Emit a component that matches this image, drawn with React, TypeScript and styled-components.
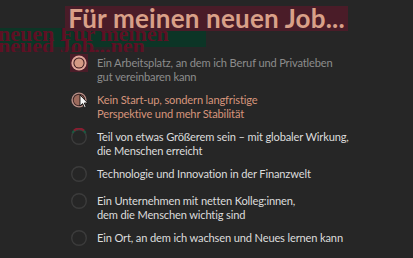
import styled, { createGlobalStyle } from "styled-components";

const GlobalStyle = createGlobalStyle`
  html, body {
    margin: 0;
    padding: 0;
    background: #262626;
  }
  body {
    font-family: "Lato", "Open Sans", sans-serif;
  }
`;

const Page = styled.div`
  position: relative;
  width: 413px;
  height: 258px;
  overflow: hidden;
  background: #262626;
  display: flex;
  flex-direction: column;
  align-items: center;
`;

const Title = styled.h1`
  margin: 6px 0 0;
  padding: 0 3px;
  background: #4a1c28;
  color: #d9a088;
  font-family: "Lato", sans-serif;
  font-weight: 700;
  font-size: 26px;
  line-height: 25px;
  letter-spacing: 0.2px;
  position: relative;
  z-index: 1;
`;

/* glitch ghost of the headline, lying over the page */
const Ghost = styled.div`
  position: absolute;
  left: 0;
  top: 28px;
  width: 206px;
  height: 24px;
  overflow: hidden;
  background: linear-gradient(#0c3526 0, #0c3526 80%, #262626 80%);
  display: flex;
  flex-direction: column;
  line-height: 12px;
`;

const GhostLine = styled.div<{ $shift: number }>`
  white-space: nowrap;
  margin-left: ${(p) => p.$shift}px;
  font-family: "Liberation Serif", serif;
  font-weight: 700;
  font-size: 22px;
  color: #5e1024;
`;

const List = styled.ul`
  list-style: none;
  margin: 25px 0 0;
  padding: 0 0 0 70px;
  align-self: stretch;
  display: flex;
  flex-direction: column;
  gap: 9px;
`;

const Item = styled.li`
  display: flex;
  align-items: flex-start;
  gap: 9px;
  min-height: 18px;
`;

const Label = styled.div<{ $tone: "muted" | "accent" | "normal" }>`
  font-size: 11.1px;
  line-height: 14px;
  letter-spacing: -0.15px;
  color: ${(p) =>
    p.$tone === "muted" ? "#8c8c8c" : p.$tone === "accent" ? "#d6957c" : "#dcdcdc"};
`;

const RadioWrap = styled.div`
  position: relative;
  width: 18px;
  height: 18px;
  flex: none;
  margin-top: -2px;
`;

const Cursor = styled.svg`
  position: absolute;
  left: 9px;
  top: 3px;
`;

type Kind = "first" | "second" | "glitch" | "empty";

function Radio({ kind }: { kind: Kind }) {
  return (
    <RadioWrap>
      <svg width="18" height="18" viewBox="0 0 18 18">
        {kind === "first" && (
          <>
            <rect x="0" y="0" width="18" height="18" fill="#4a1c28" />
            <circle cx="9" cy="9" r="7.6" fill="#e0a69a" />
            <circle cx="9" cy="9" r="5.6" fill="#3a1a1e" />
            <circle cx="9" cy="9" r="4.6" fill="#d49a84" />
          </>
        )}
        {kind === "second" && (
          <>
            <circle cx="9" cy="9" r="7.6" fill="#b89088" />
            <circle cx="9" cy="9" r="6.2" fill="#3a2424" />
            <circle cx="9" cy="9" r="5.3" fill="#9c6a5c" />
          </>
        )}
        {(kind === "glitch" || kind === "empty") && (
          <circle cx="9" cy="9" r="7.3" fill="none" stroke="#3c3c3c" strokeWidth="1.4" />
        )}
        {kind === "glitch" && (
          <>
            <path d="M2.5 5 A7.3 7.3 0 0 1 15.5 5" fill="none" stroke="#1a5a40" strokeWidth="2" />
            <path d="M4 2.5 A7.3 7.3 0 0 1 14 2.5" fill="none" stroke="#8a1c30" strokeWidth="2" />
          </>
        )}
      </svg>
      {kind === "second" && (
        <Cursor width="10" height="15" viewBox="0 0 10 15">
          <path d="M1 1 L1 12 L3.6 9.6 L5.6 14 L7.2 13.3 L5.3 9 L8.8 9 Z" fill="#f4f4f4" stroke="#111" strokeWidth="0.9" />
        </Cursor>
      )}
    </RadioWrap>
  );
}

const items: { kind: Kind; tone: "muted" | "accent" | "normal"; lines: string[] }[] = [
  { kind: "first", tone: "muted", lines: ["Ein Arbeitsplatz, an dem ich Beruf und Privatleben", "gut vereinbaren kann"] },
  { kind: "second", tone: "accent", lines: ["Kein Start-up, sondern langfristige", "Perspektive und mehr Stabilität"] },
  { kind: "glitch", tone: "normal", lines: ["Teil von etwas Größerem sein – mit globaler Wirkung,", "die Menschen erreicht"] },
  { kind: "empty", tone: "normal", lines: ["Technologie und Innovation in der Finanzwelt"] },
  { kind: "empty", tone: "normal", lines: ["Ein Unternehmen mit netten Kolleg:innen,", "dem die Menschen wichtig sind"] },
  { kind: "empty", tone: "normal", lines: ["Ein Ort, an dem ich wachsen und Neues lernen kann"] },
];

export default function App() {
  return (
    <>
      <GlobalStyle />
      <Page>
        <Ghost aria-hidden>
          <GhostLine $shift={-2}>neuen Für meinen</GhostLine>
          <GhostLine $shift={-2}>neued Job...nen</GhostLine>
          <GhostLine $shift={6}>neuen Job...</GhostLine>
        </Ghost>
        <Title>Für meinen neuen Job...</Title>
        <List>
          {items.map((it, i) => (
            <Item key={i}>
              <Radio kind={it.kind} />
              <Label $tone={it.tone}>
                {it.lines.map((l, j) => (
                  <div key={j}>{l}</div>
                ))}
              </Label>
            </Item>
          ))}
        </List>
      </Page>
    </>
  );
}
